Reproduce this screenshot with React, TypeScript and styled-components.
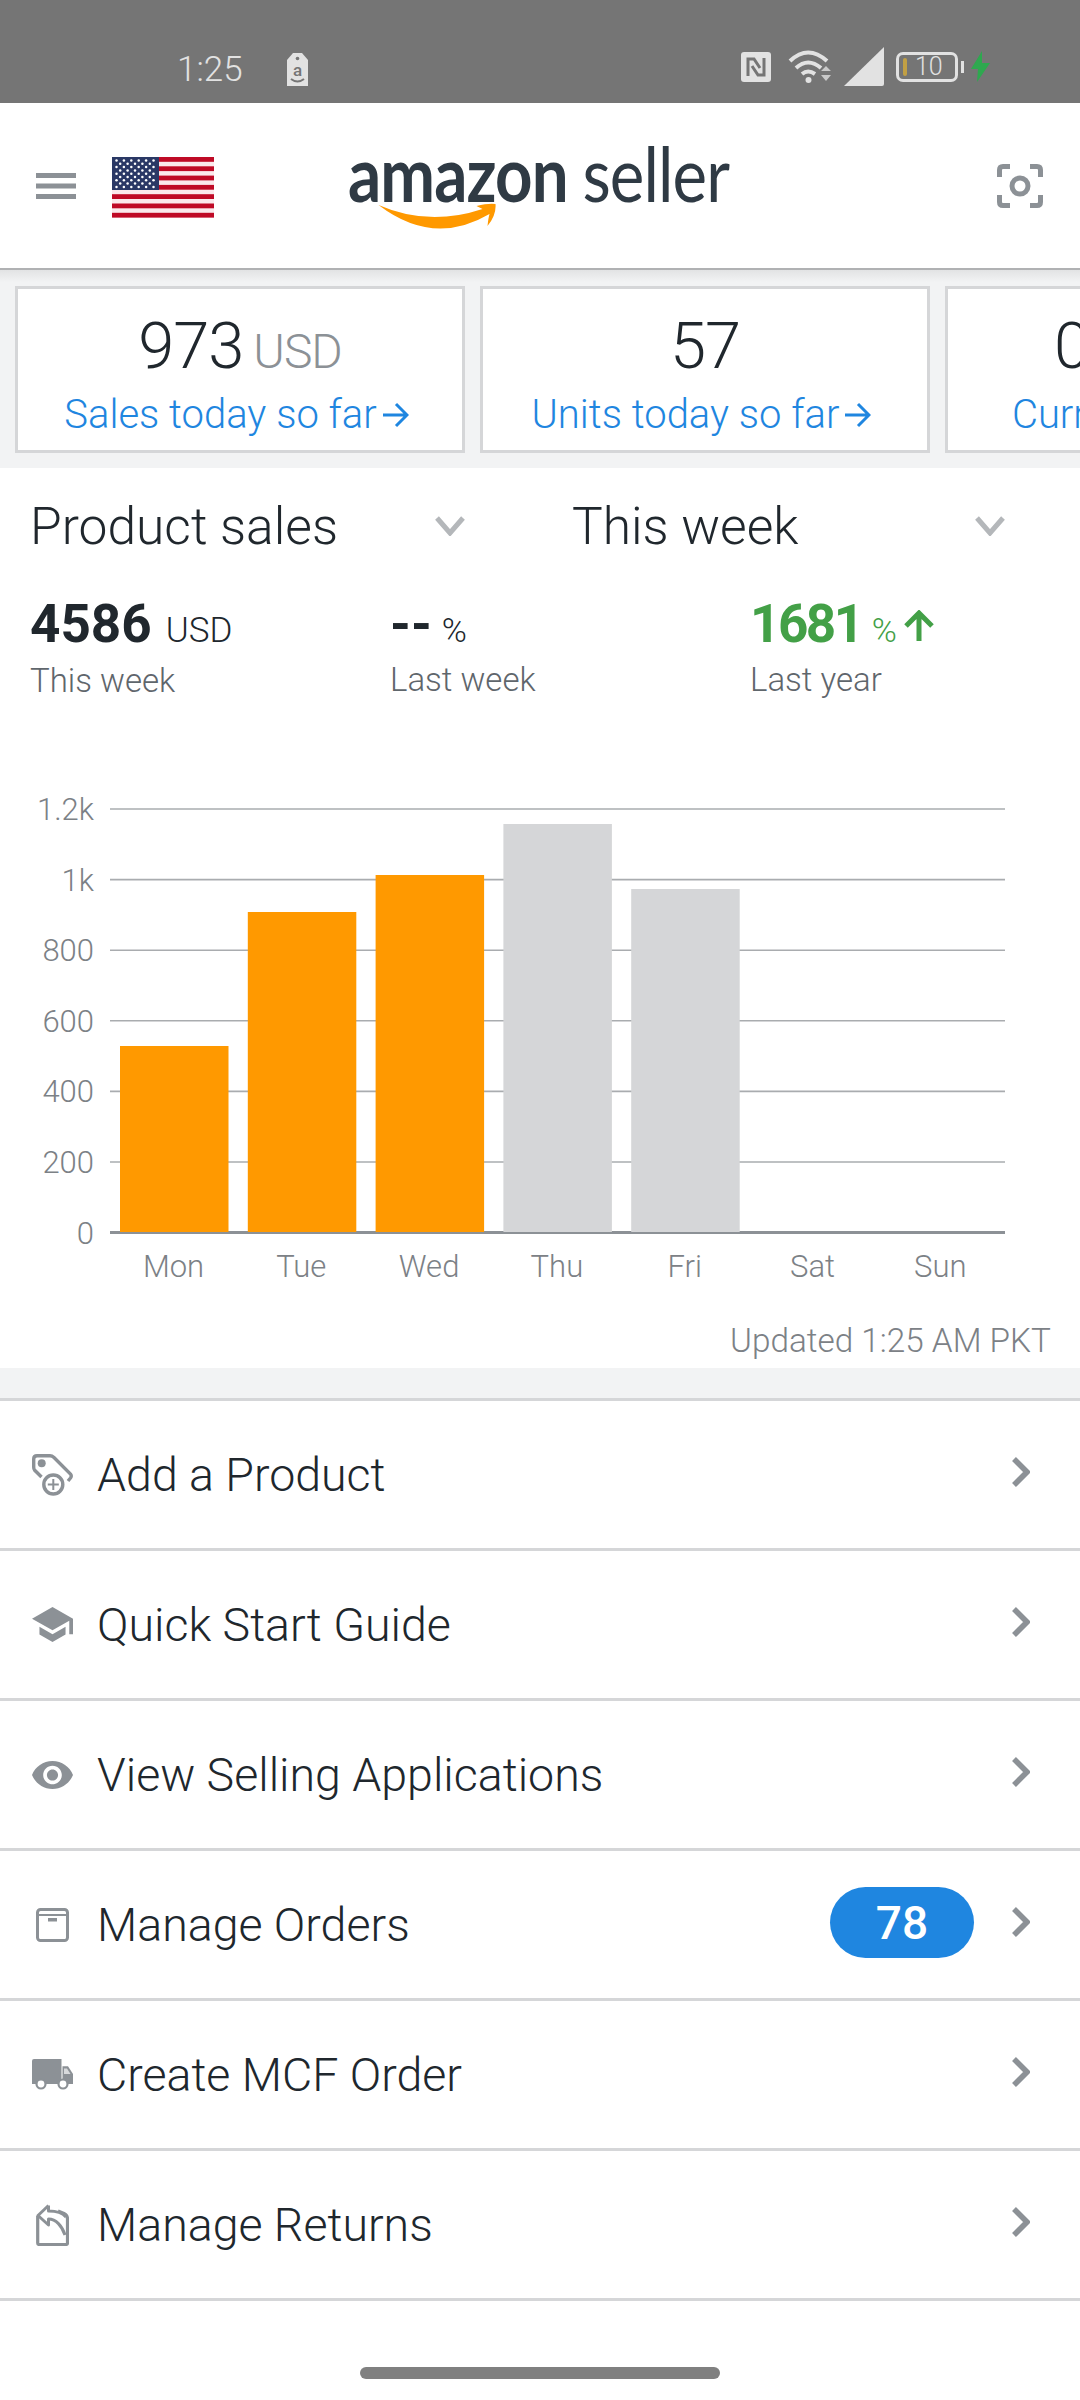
import { createGlobalStyle, styled } from "styled-components";

const GlobalStyle = createGlobalStyle`
    html, body {
        margin: 0;
        background: #ffffff;
    }

    body {
        font-family: Roboto, "Liberation Sans", sans-serif;
        color: #20272d;
    }
`;

const Page = styled.div`
    width: 1080px;
    height: 2400px;
    overflow: hidden;
    display: flex;
    flex-direction: column;
    background: #ffffff;
`;

const StatusBar = styled.div`
    height: 103px;
    flex: none;
    background: #757575;
    display: flex;
    align-items: flex-end;
    justify-content: space-between;
    padding: 0 90px 17px 177px;
    box-sizing: border-box;
    color: #e2e2e2;
`;

const StatusLeft = styled.div`
    display: flex;
    align-items: center;
    gap: 43px;
`;

const StatusTime = styled.span`
    font-size: 35px;
    font-weight: 300;
    line-height: 30px;
`;

const StatusRight = styled.div`
    display: flex;
    align-items: center;
    gap: 12px;
`;

const NfcGlyph = styled.svg`
    margin-right: 5px;
`;

const BatteryBox = styled.div`
    position: relative;
    width: 62px;
    height: 30px;
    border: 3px solid #e2e2e2;
    border-radius: 7px;
    box-sizing: border-box;
    display: flex;
    align-items: center;
    padding-left: 4px;
    gap: 8px;
    font-size: 25px;
    font-weight: 300;
`;

const BatteryFill = styled.span`
    width: 4px;
    height: 18px;
    border-radius: 2px;
    background: #c2a044;
`;

const BatteryNub = styled.span`
    position: absolute;
    right: -9px;
    top: 6px;
    width: 3px;
    height: 12px;
    background: #e2e2e2;
`;

const AppHeader = styled.header`
    height: 167px;
    flex: none;
    box-sizing: border-box;
    background: #ffffff;
    border-bottom: 2px solid #b0b1b3;
    display: flex;
    align-items: center;
    padding: 0 37px 0 36px;
`;

const Flag = styled.svg`
    width: 102px;
    height: 61px;
    margin: 3px 0 0 36px;
    flex: none;
`;

const LogoWrap = styled.div`
    position: relative;
    margin-left: 134px;
    height: 90px;
    width: 385px;
    flex: none;
    color: #2f3a44;
    font-family: "Lato", sans-serif;
`;

const LogoText = styled.div`
    display: flex;
    align-items: baseline;
    line-height: 74px;
    margin-top: -5px;
    white-space: nowrap;
    transform: scaleX(0.86);
    transform-origin: left center;
`;

const LogoBold = styled.span`
    font-size: 76px;
    font-weight: 700;
    letter-spacing: -1px;
`;

const LogoLight = styled.span`
    font-size: 76px;
    font-weight: 400;
    margin-left: 17px;
    letter-spacing: -1px;
`;

const LogoSmile = styled.svg`
    position: absolute;
    left: 29px;
    top: 62px;
    width: 121px;
    height: 26px;
`;

const ScanIcon = styled.svg`
    width: 46px;
    height: 44px;
    margin-left: auto;
    flex: none;
`;

const TilesBand = styled.div`
    flex: none;
    height: 198px;
    box-sizing: border-box;
    padding: 16px 0 15px 15px;
    display: flex;
    gap: 15px;
    overflow: hidden;
    background: linear-gradient(#e2e3e4 0, #f2f3f4 12px);
`;

const Tile = styled.div`
    flex: none;
    width: 450px;
    height: 167px;
    box-sizing: border-box;
    border: 3px solid #d5d6d8;
    background: #ffffff;
    display: flex;
    flex-direction: column;
    align-items: center;
    padding-top: 21px;
    white-space: nowrap;
`;

const TileValue = styled.div<{ $shift?: number }>`
    height: 72px;
    font-size: 65px;
    font-weight: 300;
    line-height: 72px;
    letter-spacing: -1px;
    padding-right: ${(p) => p.$shift || 0}px;
`;

const TileUnit = styled.span`
    font-size: 48px;
    color: #8c9196;
    margin-left: 10px;
`;

const TileLink = styled.div`
    margin-top: 10px;
    padding-right: 7px;
    font-size: 40px;
    font-weight: 300;
    line-height: 46px;
    color: #1f86e0;
    display: flex;
    align-items: center;
    gap: 5px;
`;

const Selectors = styled.div`
    flex: none;
    height: 116px;
    display: grid;
    grid-template-columns: 435px 433px;
    column-gap: 107px;
    align-items: center;
    padding-left: 30px;
`;

const SelectorItem = styled.div`
    display: flex;
    align-items: center;
    justify-content: space-between;
    font-size: 51.5px;
    font-weight: 300;
`;

const Metrics = styled.div`
    flex: none;
    display: grid;
    grid-template-columns: 360px 360px 1fr;
    padding: 10px 0 0 30px;
`;

const MetricValue = styled.div<{ $tone?: string }>`
    display: flex;
    align-items: baseline;
    font-size: 53px;
    font-weight: 700;
    line-height: 60px;
    letter-spacing: ${(p) => (p.$tone ? "-2.5px" : "0")};
    color: ${(p) => p.$tone || "#20272d"};
`;

const MetricUnit = styled.span<{ $tight?: boolean }>`
    font-size: ${(p) => (p.$tight ? 34 : 35)}px;
    font-weight: 300;
    letter-spacing: 0;
    margin-left: ${(p) => (p.$tight ? 10 : 14)}px;
`;

const MetricArrow = styled.svg`
    margin-left: 6px;
`;

const MetricLabel = styled.div`
    margin-top: 0;
    font-size: 33px;
    font-weight: 300;
    color: #5f666c;
    line-height: 40px;
`;

const ChartBox = styled.svg`
    display: block;
    flex: none;
    margin-top: 89px;
    width: 1080px;
    height: 530px;
`;

const AxisText = styled.text`
    font-family: Roboto, sans-serif;
    font-size: 31px;
    font-weight: 300;
    fill: #7c8186;
`;

const UpdatedLine = styled.div`
    flex: none;
    height: 48px;
    box-sizing: border-box;
    text-align: right;
    padding-right: 29px;
    font-size: 33.3px;
    font-weight: 300;
    color: #7c8186;
    line-height: 42px;
`;

const GapBand = styled.div`
    flex: none;
    height: 30px;
    background: #f2f3f4;
`;

const MenuList = styled.div`
    flex: none;
    border-top: 3px solid #d5d6d8;
`;

const MenuRow = styled.div`
    height: 150px;
    box-sizing: border-box;
    border-bottom: 3px solid #d5d6d8;
    display: flex;
    align-items: center;
    padding: 0 50px 0 32px;
`;

const MenuIcon = styled.div`
    width: 41px;
    flex: none;
    display: flex;
    justify-content: center;
`;

const MenuLabel = styled.div`
    margin-left: 24px;
    font-size: 46.5px;
    font-weight: 300;
    flex: 1;
`;

const CountBadge = styled.div`
    width: 144px;
    height: 71px;
    border-radius: 36px;
    background: #1f86e0;
    color: #ffffff;
    font-size: 46px;
    font-weight: 500;
    display: flex;
    align-items: center;
    justify-content: center;
    margin: -4px 38px 0 0;
`;

const RowChevron = styled.svg`
    margin-top: -6px;
`;

const HomeBar = styled.div`
    width: 360px;
    height: 12px;
    border-radius: 6px;
    background: #808080;
    margin: 66px auto 0;
    flex: none;
`;

const GRAY = "#8c9196";

function Chevron() {
    return (
        <svg width="30" height="20" viewBox="0 0 30 20">
            <path d="M2 2 L15 17 L28 2" fill="none" stroke="#b4b7ba" strokeWidth="5" />
        </svg>
    );
}

function ChevronRight() {
    return (
        <RowChevron width="18" height="30" viewBox="0 0 18 30">
            <path d="M2 2 L15 15 L2 28" fill="none" stroke={GRAY} strokeWidth="5.5" />
        </RowChevron>
    );
}

function LinkArrow() {
    return (
        <svg width="27" height="30" viewBox="0 0 27 30">
            <path d="M1 15 H25 M14 4 L25 15 L14 26" fill="none" stroke="#1f86e0" strokeWidth="3" />
        </svg>
    );
}

function TagPlus() {
    return (
        <svg width="41" height="42" viewBox="0 0 41 42">
            <path d="M9.500 23 L2.500 16 Q1.700 15 1.700 13 V5 Q1.700 1.700 5 1.700 H18 Q20 1.700 22 3.500 L38.500 20 Q40 22 38.500 24 L36 27" fill="none" stroke={GRAY} strokeWidth="3.400" />
            <circle cx="9.700" cy="9.300" r="4" fill={GRAY} />
            <circle cx="21.300" cy="30.500" r="9.500" fill="#fff" stroke={GRAY} strokeWidth="3.400" />
            <path d="M21.300 25 V36 M15.800 30.500 H26.800" stroke={GRAY} strokeWidth="2" />
        </svg>
    );
}

function CapIcon() {
    return (
        <svg width="41" height="35" viewBox="1 3 22 18" preserveAspectRatio="none">
            <path fill={GRAY} d="M5 13.18v4L12 21l7-3.820v-4L12 17l-7-3.820zM12 3L1 9l11 6 9-4.910V17h2V9L12 3z" />
        </svg>
    );
}

function EyeIcon() {
    return (
        <svg width="41" height="28" viewBox="1 4.500 22 15" preserveAspectRatio="none">
            <path fill={GRAY} d="M12 4.500C7 4.500 2.730 7.610 1 12c1.730 4.390 6 7.500 11 7.500s9.270-3.110 11-7.500c-1.730-4.390-6-7.500-11-7.500zM12 17c-2.760 0-5-2.240-5-5s2.240-5 5-5 5 2.240 5 5-2.240 5-5 5zm0-8c-1.660 0-3 1.340-3 3s1.340 3 3 3 3-1.340 3-3-1.340-3-3-3z" />
        </svg>
    );
}

function BoxIcon() {
    return (
        <svg width="33" height="34" viewBox="0 0 33 34">
            <rect x="1.500" y="1.500" width="30" height="31" rx="3" fill="none" stroke={GRAY} strokeWidth="3" />
            <path d="M1.500 7 H31.500" stroke={GRAY} strokeWidth="2" />
            <rect x="12" y="10" width="9" height="3.500" fill={GRAY} />
        </svg>
    );
}

function TruckIcon() {
    return (
        <svg width="41" height="31" viewBox="0 0 41 31">
            <path fill={GRAY} d="M2 0 H29.500 V25 H0 V2 Q0 0 2 0Z" />
            <path fill={GRAY} d="M30.500 7.300 H36 L41 15 V25 H30.500Z" />
            <path fill="#d7d9db" d="M32 9.500 H35 L38.500 15 H32Z" />
            <circle cx="9" cy="25" r="4.500" fill="#fff" stroke={GRAY} strokeWidth="2.200" />
            <circle cx="31" cy="25" r="4.500" fill="#fff" stroke={GRAY} strokeWidth="2.200" />
        </svg>
    );
}

function ReturnsIcon() {
    return (
        <svg width="33" height="42" viewBox="0 0 33 42">
            <path d="M1.700 12 V39 Q1.700 40.500 3 40.500 H30 Q31.500 40.500 31.500 39 V15 Q31.500 11 28 9.500 L22 7" fill="none" stroke={GRAY} strokeWidth="3.200" />
            <path d="M12.500 1.500 L2 11.500 L12.500 21 V15 C20 15 26 22 29 31 M12.500 1.500 V7 C20 7 26 8 30 13" fill="none" stroke={GRAY} strokeWidth="3" strokeLinejoin="round" />
        </svg>
    );
}

function NfcIcon() {
    return (
        <NfcGlyph width="30" height="30" viewBox="0 0 30 30">
            <rect width="30" height="30" rx="3" fill="#e2e2e2" />
            <path d="M7 24 V7 H13 L19 16 M23 6 V23 H17 L11 14" fill="none" stroke="#757575" strokeWidth="3" />
        </NfcGlyph>
    );
}

function WifiIcon() {
    return (
        <svg width="44" height="34" viewBox="0 0 44 34">
            <path d="M2 11 Q20 -6 39 11 M8 18 Q20 7 33 18 M14 24 Q20 19 27 24" fill="none" stroke="#e2e2e2" strokeWidth="4" />
            <circle cx="20.500" cy="30" r="3" fill="#e2e2e2" />
            <path d="M33 21 L38 16 L43 21Z M33 25 H43 L38 31Z" fill="#c9c9c9" />
        </svg>
    );
}

function SignalIcon() {
    return (
        <svg width="40" height="39" viewBox="0 0 40 39">
            <path d="M40 0 V37 Q40 39 38 39 H0Z" fill="#e2e2e2" />
        </svg>
    );
}

function BoltIcon() {
    return (
        <svg width="20" height="31" viewBox="0 0 20 31">
            <path d="M12 0 L1 18 H8 L7 31 L20 12 H12Z" fill="#2ea84f" />
        </svg>
    );
}

function BagIcon() {
    return (
        <svg width="23" height="33" viewBox="0 0 23 33">
            <path d="M7 0 H16 L22 7 V33 H1 V7Z" fill="#e2e2e2" />
            <circle cx="11.500" cy="5.500" r="1.800" fill="#757575" />
            <text x="11.500" y="23" textAnchor="middle" fontFamily="Roboto, sans-serif" fontSize="17" fontWeight="500" fill="#757575">a</text>
            <path d="M5 26 Q11.500 31 18 26" fill="none" stroke="#757575" strokeWidth="2" />
        </svg>
    );
}

function UsFlag() {
    const stripes = [0, 1, 2, 3, 4, 5, 6];
    const stars: [number, number][] = [];
    for (let r = 0; r < 9; r++) {
        const n = r % 2 === 0 ? 6 : 5;
        for (let c = 0; c < n; c++) {
            stars.push([4.500 + c * 7.400 + (r % 2 === 0 ? 0 : 3.700), 3.500 + r * 3.300]);
        }
    }
    return (
        <Flag viewBox="0 0 102 61">
            <rect width="102" height="61" fill="#fbe9ec" />
            {stripes.map((i) => (
                <rect key={i} y={i * 9.300} width="102" height="4.800" fill="#bf0a26" />
            ))}
            <rect width="47" height="33" fill="#2a3865" />
            {stars.map(([x, y], i) => (
                <circle key={i} cx={x} cy={y} r="1.250" fill="#ffffff" />
            ))}
        </Flag>
    );
}

const GRID_LABELS = ["1.2k", "1k", "800", "600", "400", "200", "0"];
const DAYS = ["Mon", "Tue", "Wed", "Thu", "Fri", "Sat", "Sun"];
const BARS = [
    { top: 1046, color: "#ff9900" },
    { top: 912, color: "#ff9900" },
    { top: 875, color: "#ff9900" },
    { top: 824, color: "#d5d6d8" },
    { top: 889, color: "#d5d6d8" },
];

// chart drawn in page coordinates, offset by where the svg starts
function SalesChart() {
    const originY = 790;
    return (
        <ChartBox viewBox={`0 ${originY} 1080 530`}>
            {GRID_LABELS.map((label, i) => {
                const y = 809 + i * 70.6;
                return (
                    <g key={label}>
                        <line x1="110" x2="1005" y1={y} y2={y} stroke={i === 6 ? "#8c9196" : "#a9acaf"} strokeWidth={i === 6 ? 3 : 1.6} />
                        <AxisText x="94" y={y + 11} textAnchor="end">{label}</AxisText>
                    </g>
                );
            })}
            {BARS.map((b, i) => (
                <rect key={i} x={120 + i * 127.8} y={b.top} width="108.500" height={1232 - b.top} fill={b.color} />
            ))}
            {DAYS.map((d, i) => (
                <AxisText key={d} x={173.5 + i * 127.8} y="1277" textAnchor="middle">{d}</AxisText>
            ))}
        </ChartBox>
    );
}

const MENU = [
    { label: "Add a Product", icon: <TagPlus /> },
    { label: "Quick Start Guide", icon: <CapIcon /> },
    { label: "View Selling Applications", icon: <EyeIcon /> },
    { label: "Manage Orders", icon: <BoxIcon />, count: 78 },
    { label: "Create MCF Order", icon: <TruckIcon /> },
    { label: "Manage Returns", icon: <ReturnsIcon /> },
];

function App() {
    return (
        <Page>
            <GlobalStyle />
            <StatusBar>
                <StatusLeft>
                    <StatusTime>1:25</StatusTime>
                    <BagIcon />
                </StatusLeft>
                <StatusRight>
                    <NfcIcon />
                    <WifiIcon />
                    <SignalIcon />
                    <BatteryBox>
                        <BatteryFill />
                        10
                        <BatteryNub />
                    </BatteryBox>
                    <BoltIcon />
                </StatusRight>
            </StatusBar>
            <AppHeader>
                <svg width="40" height="26" viewBox="0 0 40 26">
                    <path d="M0 2.500 H40 M0 13 H40 M0 23.500 H40" stroke={GRAY} strokeWidth="5" />
                </svg>
                <UsFlag />
                <LogoWrap>
                    <LogoText>
                        <LogoBold>amazon</LogoBold>
                        <LogoLight>seller</LogoLight>
                    </LogoText>
                    <LogoSmile viewBox="0 0 118 26">
                        <path d="M0 2 Q50 24 104 6 L98 3 Q110 0 117 1 Q118 12 109 23 Q110 14 111 11 Q55 44 0 2Z" fill="#ff9900" />
                    </LogoSmile>
                </LogoWrap>
                <ScanIcon viewBox="0 0 46 44">
                    <path d="M2.500 13 V6 Q2.500 2.500 6 2.500 H13 M33 2.500 H40 Q43.500 2.500 43.500 6 V13 M2.500 31 V38 Q2.500 41.500 6 41.500 H13 M33 41.500 H40 Q43.500 41.500 43.500 38 V31" fill="none" stroke={GRAY} strokeWidth="5" />
                    <circle cx="23" cy="22" r="8" fill="none" stroke={GRAY} strokeWidth="5" />
                </ScanIcon>
            </AppHeader>
            <TilesBand>
                <Tile>
                    <TileValue>973<TileUnit>USD</TileUnit></TileValue>
                    <TileLink>Sales today so far<LinkArrow /></TileLink>
                </Tile>
                <Tile>
                    <TileValue>57</TileValue>
                    <TileLink>Units today so far<LinkArrow /></TileLink>
                </Tile>
                <Tile>
                    <TileValue $shift={14}>0.00<TileUnit>USD</TileUnit></TileValue>
                    <TileLink>Current balance<LinkArrow /></TileLink>
                </Tile>
            </TilesBand>
            <Selectors>
                <SelectorItem>Product sales<Chevron /></SelectorItem>
                <SelectorItem>This week<Chevron /></SelectorItem>
            </Selectors>
            <Metrics>
                <div>
                    <MetricValue>4586<MetricUnit>USD</MetricUnit></MetricValue>
                    <MetricLabel>This week</MetricLabel>
                </div>
                <div>
                    <MetricValue>--<MetricUnit $tight>%</MetricUnit></MetricValue>
                    <MetricLabel>Last week</MetricLabel>
                </div>
                <div>
                    <MetricValue $tone="#43a047">
                        1681<MetricUnit $tight>%</MetricUnit>
                        <MetricArrow width="32" height="32" viewBox="0 0 32 32">
                            <path d="M16 31 V3 M3 16 L16 3 L29 16" fill="none" stroke="#43a047" strokeWidth="5" />
                        </MetricArrow>
                    </MetricValue>
                    <MetricLabel>Last year</MetricLabel>
                </div>
            </Metrics>
            <SalesChart />
            <UpdatedLine>Updated 1:25 AM PKT</UpdatedLine>
            <GapBand />
            <MenuList>
                {MENU.map((m) => (
                    <MenuRow key={m.label}>
                        <MenuIcon>{m.icon}</MenuIcon>
                        <MenuLabel>{m.label}</MenuLabel>
                        {m.count ? <CountBadge>{m.count}</CountBadge> : null}
                        <ChevronRight />
                    </MenuRow>
                ))}
            </MenuList>
            <HomeBar />
        </Page>
    );
}

export default App;
